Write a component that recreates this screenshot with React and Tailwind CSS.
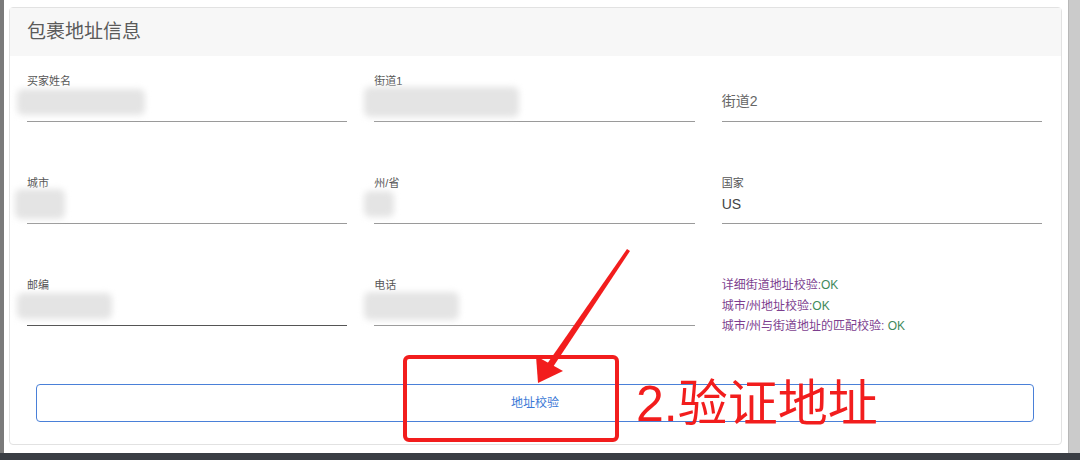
import React from "react";

const font = { fontFamily: '"Liberation Sans", "Noto Sans CJK SC", sans-serif' };

function Blur({ w, h = 26, ml = -10, mt = 0 }) {
  // masked (blurred) customer data
  return (
    <div
      className="bg-[#e4e4e4] rounded-[6px] blur-[3px]"
      style={{ width: w, height: h, marginLeft: ml, marginTop: mt }}
    />
  );
}

function Field({ label, children, line = "border-[#9a9a9a]" }) {
  return (
    <div className={`border-b ${line} pb-[7px]`}>
      <div className="h-[14px] text-[11px] leading-[14px] text-[#555]">{label}</div>
      <div className="h-[24px] mt-[2px] flex items-center text-[14px] text-[#444]">{children}</div>
    </div>
  );
}

export default function App() {
  return (
    <div className="w-[1080px] h-[460px] flex flex-col bg-white overflow-hidden" style={font}>
      <div className="flex flex-1 min-h-0">
        <div className="w-[4px] bg-[#7a7a7a]" />
        <div className="flex-1 pt-[7px] pl-[5px] pr-[6px] pb-[8px] bg-white">
          <div className="h-[438px] border border-[#e2e2e2] rounded-[4px] flex flex-col">
            {/* header */}
            <div className="h-[48px] bg-[#f7f7f7] px-[17px] flex items-center">
              <h2 className="text-[19px] text-[#5a5a5a] font-normal">包裹地址信息</h2>
            </div>

            {/* fields */}
            <div className="grid grid-cols-3 items-start gap-x-[27px] gap-y-[54px] pl-[17px] pr-[19px] pt-[18px]">
              <Field label="买家姓名">
                <Blur w={128} />
              </Field>
              <Field label="街道1">
                <Blur w={155} h={30} />
              </Field>
              <Field label="">
                <span className="text-[14px] text-[#666] -mt-[2px]">街道2</span>
              </Field>

              <Field label="城市">
                <Blur w={50} h={30} ml={-12} />
              </Field>
              <Field label="州/省">
                <Blur w={30} h={26} />
              </Field>
              <Field label="国家">
                <span className="text-[14px] text-[#444]">US</span>
              </Field>

              <Field label="邮编" line="border-[#555]">
                <Blur w={95} />
              </Field>
              <Field label="电话">
                <Blur w={95} h={28} />
              </Field>
              <div className="-mt-[3px] text-[12px] leading-[20.5px] text-[#7d3f8f]">
                <div>
                  详细街道地址校验:<span className="text-[#3f8a5c]">OK</span>
                </div>
                <div>
                  城市/州地址校验:<span className="text-[#3f8a5c]">OK</span>
                </div>
                <div>
                  城市/州与街道地址的匹配校验: <span className="text-[#3f8a5c]">OK</span>
                </div>
              </div>
            </div>

            {/* action */}
            <div className="pl-[26px] pr-[27px] mt-auto mb-[22px]">
              <button className="w-full h-[38px] border border-[#4a80d8] rounded-[4px] text-[12px] text-[#3a78d6] bg-white">
                地址校验
              </button>
            </div>
          </div>
        </div>
        <div className="w-[12px] bg-[#cbcbcb] border-l border-[#b8b8b8]" />
      </div>
      <div className="h-[7px] bg-[#3a3e44]" />

      {/* red annotation drawn over the screenshot */}
      <div className="absolute left-[403px] top-[355px] w-[216px] h-[87px] border-[4px] border-[#f21d1d] rounded-[6px] pointer-events-none" />
      <svg className="absolute left-0 top-0 pointer-events-none" width="1080" height="460">
        <polygon points="627,249 630,251 553,367 547,364" fill="#f21d1d" />
        <polygon points="538,383 536,356 563,371" fill="#f21d1d" />
      </svg>
      <div className="absolute left-[636px] top-[377px] text-[50px] leading-[54px] text-[#f21d1d] pointer-events-none whitespace-nowrap">
        2.验证地址
      </div>
    </div>
  );
}
